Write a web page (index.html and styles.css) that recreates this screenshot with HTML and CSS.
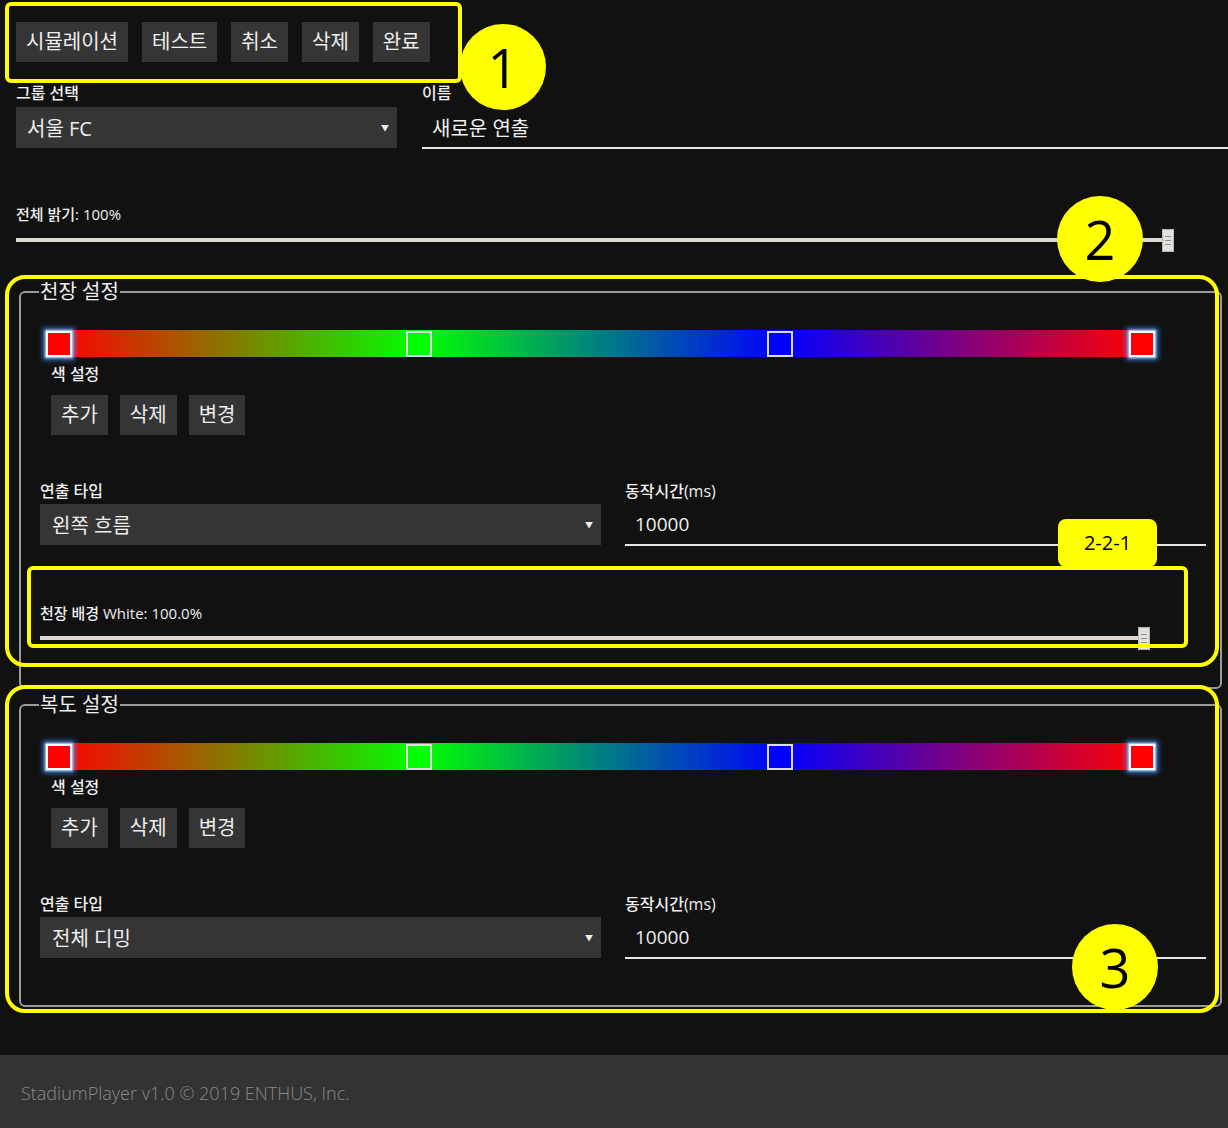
FILE: index.html
```html
<!DOCTYPE html>
<html lang="ko">
<head>
<meta charset="utf-8">
<title>StadiumPlayer</title>
<link rel="stylesheet" href="styles.css">
</head>
<body>
<div class="app">
  <main class="content">
    <div class="toolbar">
      <button class="btn">시뮬레이션</button>
      <button class="btn">테스트</button>
      <button class="btn">취소</button>
      <button class="btn">삭제</button>
      <button class="btn">완료</button>
    </div>

    <div class="top-row">
      <div class="field">
        <div class="label">그룹 선택</div>
        <div class="select"><span>서울 FC</span><span class="arrow">▼</span></div>
      </div>
      <div class="field">
        <div class="label">이름</div>
        <div class="input">새로운 연출</div>
      </div>
    </div>

    <div class="brightness">
      <div class="label">전체 밝기: 100%</div>
      <div class="slider"><span class="thumb"></span></div>
    </div>

    <fieldset class="group">
      <legend>천장 설정</legend>
      <div class="color-bar">
        <span class="handle red selected" style="left:13px"></span>
        <span class="handle green" style="left:373px"></span>
        <span class="handle blue" style="left:734px"></span>
        <span class="handle red selected" style="left:1096px"></span>
      </div>
      <div class="color-settings">
        <div class="label">색 설정</div>
        <div class="btn-row">
          <button class="btn">추가</button>
          <button class="btn">삭제</button>
          <button class="btn">변경</button>
        </div>
      </div>
      <div class="effect-row">
        <div class="field">
          <div class="label">연출 타입</div>
          <div class="select"><span>왼쪽 흐름</span><span class="arrow">▼</span></div>
        </div>
        <div class="field">
          <div class="label">동작시간(ms)</div>
          <div class="input">10000</div>
        </div>
      </div>
      <div class="bg-block">
        <div class="label">천장 배경 White: 100.0%</div>
        <div class="slider"><span class="thumb"></span></div>
      </div>
    </fieldset>

    <fieldset class="group corridor">
      <legend>복도 설정</legend>
      <div class="color-bar">
        <span class="handle red selected" style="left:13px"></span>
        <span class="handle green" style="left:373px"></span>
        <span class="handle blue" style="left:734px"></span>
        <span class="handle red selected" style="left:1096px"></span>
      </div>
      <div class="color-settings">
        <div class="label">색 설정</div>
        <div class="btn-row">
          <button class="btn">추가</button>
          <button class="btn">삭제</button>
          <button class="btn">변경</button>
        </div>
      </div>
      <div class="effect-row">
        <div class="field">
          <div class="label">연출 타입</div>
          <div class="select"><span>전체 디밍</span><span class="arrow">▼</span></div>
        </div>
        <div class="field">
          <div class="label">동작시간(ms)</div>
          <div class="input">10000</div>
        </div>
      </div>
    </fieldset>
  </main>

  <footer class="footer">StadiumPlayer v1.0 © 2019 ENTHUS, Inc.</footer>

  <div class="anno-box box1"></div>
  <div class="anno-circle c1">1</div>
  <div class="anno-box box2"></div>
  <div class="anno-circle c2">2</div>
  <div class="anno-box box221"></div>
  <div class="anno-tag">2-2-1</div>
  <div class="anno-box box3"></div>
  <div class="anno-circle c3">3</div>
</div>
</body>
</html>
```

FILE: styles.css
```css
* { box-sizing: border-box; }

html, body {
  margin: 0;
  padding: 0;
  background: #111111;
}

body {
  font-family: "Open Sans", "Noto Sans CJK KR", sans-serif;
  color: #eeeeee;
}

.app {
  position: relative;
  width: 1228px;
  min-height: 1128px;
  display: flex;
  flex-direction: column;
}

.content {
  padding: 22px 0 0 16px;
}

.label {
  font-size: 16px;
  line-height: 20px;
  font-weight: 500;
  color: #eeeeee;
  white-space: nowrap;
}

.btn {
  font-family: inherit;
  font-size: 20px;
  line-height: 24px;
  height: 40px;
  padding: 0 10px;
  background: #353535;
  color: #eeeeee;
  border: none;
  margin: 0;
}

.toolbar {
  display: flex;
  gap: 14px;
}

.top-row {
  margin-top: 21px;
  display: grid;
  grid-template-columns: 381px 1fr;
  column-gap: 25px;
}

.field .label {
  margin-bottom: 4px;
}

.select {
  height: 41px;
  background: #353535;
  display: flex;
  align-items: center;
  justify-content: space-between;
  padding: 0 8px 0 11px;
  font-size: 20px;
}

.select .arrow {
  font-size: 8px;
  color: #eeeeee;
}

.input {
  height: 42px;
  border-bottom: 2px solid #e6e6e6;
  display: flex;
  align-items: center;
  padding-left: 10px;
  font-size: 20px;
}

.effect-row .input {
  font-size: 19px;
}

.brightness {
  margin-top: 55px;
  margin-right: 54px;
}

.brightness .label {
  margin-bottom: 4px;
  font-size: 15px;
}

.slider {
  height: 24px;
  display: flex;
  justify-content: flex-end;
  align-items: center;
  background: linear-gradient(#dcd8d1, #dcd8d1) no-repeat left center / calc(100% - 6px) 4px;
}

.thumb {
  width: 12px;
  height: 23px;
  background: #e4e1dc;
  border: 1px solid #b8b5b0;
  display: flex;
  align-items: center;
  justify-content: center;
}

.thumb::before {
  content: "";
  width: 6px;
  height: 7px;
  border-top: 1px solid #8f8f8f;
  border-bottom: 1px solid #8f8f8f;
  background: linear-gradient(#8f8f8f, #8f8f8f) no-repeat center / 100% 1px;
}

.group {
  margin: 28px 6px 0 3px;
  border: 2px solid #9a9a9a;
  border-radius: 6px;
  padding: 26px 14px 37px 19px;
  min-width: 0;
}

.group legend {
  padding: 0 1px;
  margin-left: -1px;
  font-size: 20px;
  line-height: 24px;
  color: #eeeeee;
}

.group.corridor {
  margin-top: 4px;
  padding-bottom: 46px;
}

.color-bar {
  position: relative;
  height: 27px;
  margin: 0 50px 0 6px;
  background: linear-gradient(to right, #ff0000 13px, #00ff00 373px, #0000ff 734px, #ff0000 1096px);
}

.handle {
  position: absolute;
  top: 50%;
  width: 26px;
  height: 26px;
  margin: -13px 0 0 -13px;
  border: 2px solid #dedede;
}

.handle.red { background: #ff0000; }
.handle.green { background: #00ff00; }
.handle.blue { background: #0000ff; }

.handle.selected {
  border-color: #ffffff;
  box-shadow: 0 0 2px 1px #b8dcff, 0 0 5px 3px rgba(70, 150, 255, 0.75);
}

.color-settings {
  padding-left: 11px;
  margin-top: 7px;
}

.btn-row {
  margin-top: 11px;
  display: flex;
  gap: 12px;
}

.effect-row {
  margin-top: 46px;
  display: grid;
  grid-template-columns: 561px 1fr;
  column-gap: 24px;
}

.effect-row .field .label {
  margin-bottom: 3px;
}

.effect-row .select {
  padding-left: 12px;
}

.bg-block {
  margin-top: 57px;
  margin-right: 56px;
}

.bg-block .label {
  margin-bottom: 3px;
  font-size: 15px;
}

.footer {
  margin-top: auto;
  height: 73px;
  background: #333333;
  padding: 26px 0 0 21px;
  font-size: 18px;
  line-height: 24px;
  font-weight: 300;
  color: #8a8a8a;
}

/* annotation overlays */
.anno-box {
  position: absolute;
  border: 4px solid #ffff00;
  border-radius: 6px;
}

.box1 { left: 5px; top: 2px; width: 457px; height: 81px; }
.box2 { left: 5px; top: 275px; width: 1214px; height: 392px; border-radius: 20px; }
.box221 { left: 27px; top: 566px; width: 1161px; height: 82px; }
.box3 { left: 5px; top: 685px; width: 1214px; height: 328px; border-radius: 20px; }

.anno-circle {
  position: absolute;
  width: 86px;
  height: 86px;
  border-radius: 50%;
  background: #ffff00;
  color: #000000;
  font-family: "Open Sans", sans-serif;
  font-size: 54px;
  line-height: 86px;
  text-align: center;
}

.c1 { left: 460px; top: 24px; }
.c2 { left: 1057px; top: 196px; }
.c3 { left: 1072px; top: 924px; }

.anno-tag {
  position: absolute;
  left: 1058px;
  top: 519px;
  width: 99px;
  height: 48px;
  border-radius: 8px;
  background: #ffff00;
  color: #000000;
  font-family: "Open Sans", sans-serif;
  font-size: 20px;
  line-height: 48px;
  text-align: center;
}
```
